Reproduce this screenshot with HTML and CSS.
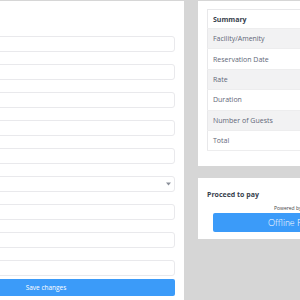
FILE: index.html
```html
<!DOCTYPE html>
<html lang="en">
<head>
  <meta charset="UTF-8" />
  <meta name="viewport" content="width=device-width, initial-scale=1.0"/>
  <title>Reservation</title>
  <link rel="stylesheet" href="styles.css">
</head>
<body>
  <div class="page">
    <!-- Reservation form -->
    <div class="form-card">
      <div class="field"><input type="text" /></div>
      <div class="field"><input type="text" /></div>
      <div class="field"><input type="text" /></div>
      <div class="field"><input type="text" /></div>
      <div class="field"><input type="text" /></div>
      <div class="field select-field">
        <select><option></option></select>
        <svg class="caret" width="5" height="4" viewBox="0 0 5 4"><path d="M0 0.5h5L2.5 3.5z" fill="#8a8f99"/></svg>
      </div>
      <div class="field"><input type="text" /></div>
      <div class="field"><input type="text" /></div>
      <div class="field last"><input type="text" /></div>
      <button class="btn-save">Save changes</button>
    </div>

    <!-- Summary side -->
    <div class="side">
      <div class="card summary-card">
        <table class="summary">
          <tr class="head"><th>Summary</th></tr>
          <tr class="odd"><td>Facility/Amenity</td></tr>
          <tr><td>Reservation Date</td></tr>
          <tr class="odd"><td>Rate</td></tr>
          <tr><td>Duration</td></tr>
          <tr class="odd"><td>Number of Guests</td></tr>
          <tr><td>Total</td></tr>
        </table>
      </div>
      <div class="card pay-card">
        <h4>Proceed to pay</h4>
        <p class="powered">Powered by <b>paymongo</b></p>
        <button class="btn-pay">Offline Payment</button>
      </div>
    </div>
  </div>
</body>
</html>
```

FILE: styles.css
```css
* {
  margin: 0;
  padding: 0;
  box-sizing: border-box;
  font-family: "Open Sans", Arial, sans-serif;
}
body {
  background: #d6d6d6;
  height: 300px;
  overflow: hidden;
  color: #5f6778;
}
.page {
  display: flex;
  gap: 14px;
  margin-left: -92px;
  padding-top: 1px;
  width: 440px;
}
.form-card {
  flex: 0 0 276px;
  background: #fff;
  padding: 35px 9px 0 9px;
  height: 299px;
}
.field {
  position: relative;
  margin-bottom: 12px;
}
.field.last {
  margin-bottom: 3px;
}
.field input,
.field select {
  display: block;
  width: 100%;
  height: 16px;
  border: 1px solid #e9e9ec;
  border-radius: 3px;
  background: #fff;
  appearance: none;
  outline: none;
}
.caret {
  position: absolute;
  right: 4px;
  top: 6px;
}
.btn-save {
  display: block;
  width: 100%;
  height: 17px;
  border: none;
  border-radius: 2px;
  background: #3b9bf9;
  color: #fff;
  font-size: 6.5px;
}
.side {
  flex: 0 0 160px;
  display: flex;
  flex-direction: column;
  gap: 12px;
}
.card {
  background: #fff;
}
.summary-card {
  padding: 8px 0 15px 9px;
}
.summary {
  width: 100%;
  border-collapse: collapse;
  border: 1px solid #e8e8ea;
  font-size: 7px;
}
.summary th,
.summary td {
  text-align: left;
  padding: 0 5px;
  height: 20.4px;
  font-weight: normal;
  border-bottom: 1px solid #ededee;
}
.summary th {
  height: 19px;
  font-weight: bold;
  color: #363e4c;
}
.summary tr.odd td {
  background: #f2f2f3;
}
.pay-card {
  height: 61px;
  padding: 12px 0 0 9px;
}
.pay-card h4 {
  font-size: 7px;
  font-weight: bold;
  color: #363e4c;
  line-height: 10px;
}
.powered {
  font-size: 5px;
  line-height: 7px;
  margin: 5px 0 0 67px;
  color: #444;
}
.btn-pay {
  display: block;
  margin: 1px 0 0 6px;
  width: 150px;
  height: 19px;
  border: none;
  border-radius: 2px;
  background: #3b9bf9;
  color: #fff;
  font-family: Lato, "Open Sans", sans-serif;
  font-size: 9px;
  font-weight: 300;
  text-align: left;
  padding-left: 55px;
}
```
